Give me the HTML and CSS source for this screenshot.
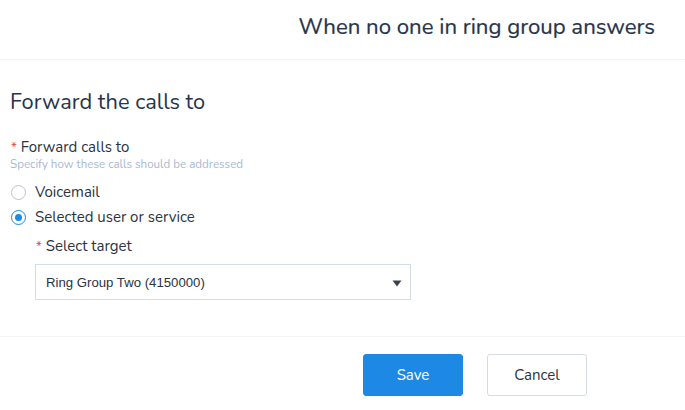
FILE: index.html
```html
<!DOCTYPE html>
<html>
<head>
<meta charset="utf-8">
<link rel="stylesheet" href="styles.css">
</head>
<body>
<div class="modal">
  <header class="head">
    <h1 class="title">When no one in ring group answers</h1>
  </header>
  <main class="body">
    <h2 class="section">Forward the calls to</h2>
    <div class="field">
      <div class="label"><span class="req">*</span> Forward calls to</div>
      <div class="hint">Specify how these calls should be addressed</div>
    </div>
    <div class="radios">
      <label class="radio"><span class="dot"></span>Voicemail</label>
      <label class="radio on"><span class="dot"></span>Selected user or service</label>
    </div>
    <div class="sub">
      <div class="label"><span class="req">*</span> Select target</div>
      <div class="select">
        <span>Ring Group Two (4150000)</span>
        <svg class="caret" width="10" height="7" viewBox="0 0 10 7"><path d="M0.5 0.5 H9.5 L5 6.5 Z" fill="#3c4350"/></svg>
      </div>
    </div>
  </main>
  <footer class="foot">
    <button class="btn primary">Save</button>
    <button class="btn">Cancel</button>
  </footer>
</div>
</body>
</html>
```
FILE: styles.css
```css
* { box-sizing: border-box; }
html, body { margin: 0; padding: 0; background: #fff; }
body { width: 685px; height: 410px; overflow: hidden; font-family: "Nunito", "Open Sans", "Lato", sans-serif; color: #2b3442; }
.modal { display: flex; flex-direction: column; height: 410px; }
.head { height: 60px; display: flex; justify-content: flex-end; align-items: center; padding: 0 30px 6px 0; border-bottom: 1px solid #f2f3f5; box-shadow: 0 1px 2px rgba(0,0,0,0.02); }
.title { margin: 0; font-weight: 400; font-size: 22.2px; color: #27344a; letter-spacing: 0; -webkit-text-stroke: 0.2px #27344a; }
.body { flex: 1; padding: 28px 0 0 10px; border-bottom: 1px solid #f2f3f5; }
.section { margin: 0; font-weight: 400; font-size: 21.8px; color: #27344a; line-height: 28px; }
.field { margin-top: 22px; }
.label { font-size: 15px; color: #2b3442; line-height: 18px; }
.req { color: #e5484d; font-size: 13px; margin-left: 1px; }
.hint { font-size: 11.6px; color: #a9b8d2; line-height: 15px; margin-top: 0; }
.radios { display: flex; flex-direction: column; gap: 6px; margin-top: 11px; }
.radio { display: flex; align-items: center; font-size: 15px; line-height: 19px; color: #2b3442; }
.dot { width: 15px; height: 15px; border-radius: 50%; border: 1px solid #b9c5d6; margin: 0 9px 0 1px; display: inline-flex; align-items: center; justify-content: center; }
.on .dot { border-color: #1e88e5; }
.on .dot::after { content: ""; width: 7px; height: 7px; border-radius: 50%; background: #1e88e5; }
.sub { padding-left: 25px; margin-top: 10px; }
.select { margin-top: 8px; width: 376px; height: 36px; border: 1px solid #d4dce8; display: flex; align-items: center; justify-content: space-between; padding: 0 8px 0 10px; font-family: "Liberation Sans", Arial, sans-serif; font-size: 13.2px; color: #2b3442; }
.caret { margin-top: 2px; }
.foot { height: 73px; display: flex; align-items: flex-start; padding: 17px 0 0 363px; gap: 24px; }
.btn { width: 100px; height: 42px; border-radius: 3px; border: 1px solid #d4dce8; background: #fff; font-family: inherit; font-size: 15px; color: #2b3442; padding: 0; }
.btn.primary { background: #1e88e5; border-color: #1e88e5; color: #fff; }
```
